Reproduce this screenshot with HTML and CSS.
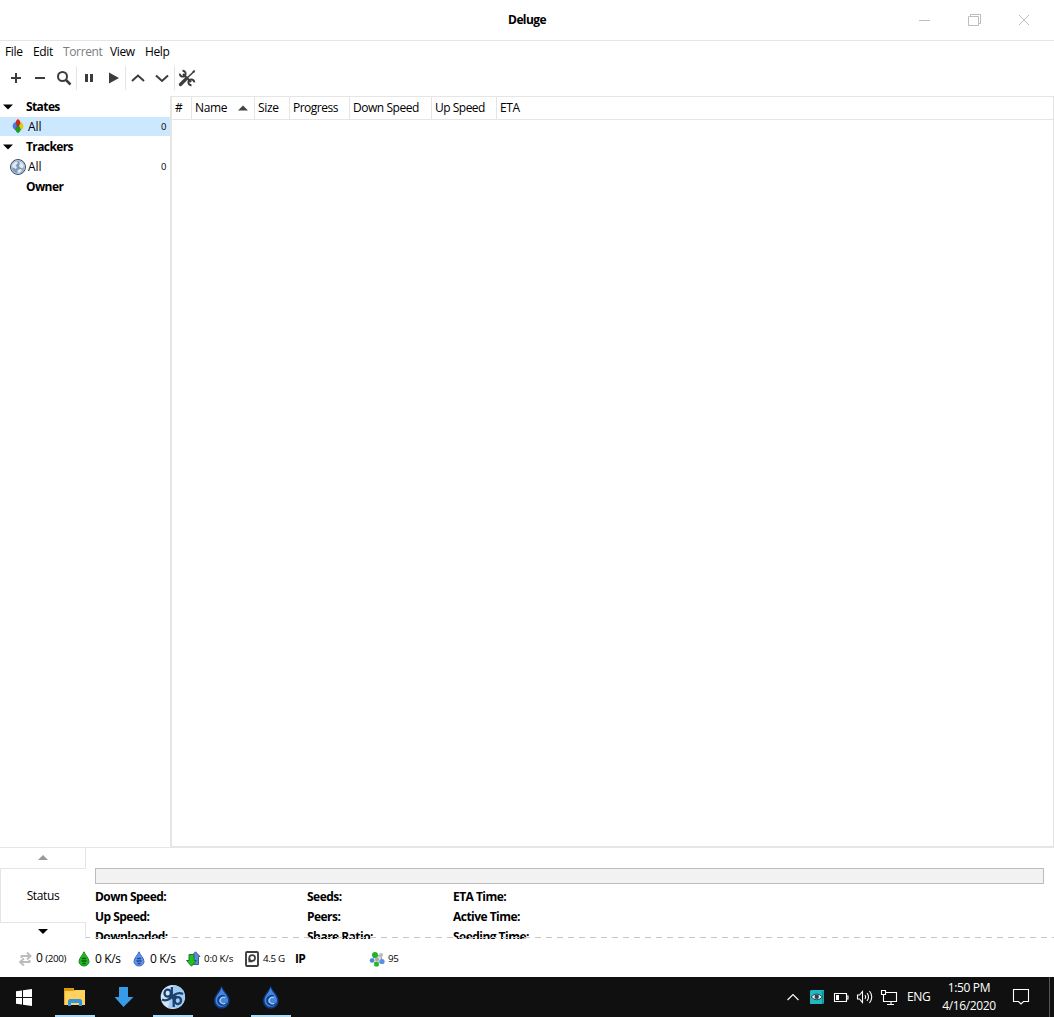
FILE: index.html
```html
<!DOCTYPE html>
<html lang="en">
<head>
<meta charset="utf-8">
<title>Deluge</title>
<link rel="stylesheet" href="styles.css">
</head>
<body>
<div class="window">
  <header class="titlebar">
    <h1 class="title">Deluge</h1>
    <div class="controls">
      <svg width="50" height="40"><path d="M20 20.500h11" class="ctl"/></svg>
      <svg width="50" height="40"><path d="M19.500 16.500h10v9h-10zM21.500 16.500v-2h10v9h-2" class="ctl"/></svg>
      <svg width="50" height="40"><path d="M20 15l10 10M30 15l-10 10" class="ctl"/></svg>
    </div>
  </header>
  <nav class="menubar"><span class="m-file">File</span><span class="m-edit">Edit</span><span class="m-torrent">Torrent</span><span class="m-view">View</span><span>Help</span></nav>
  <div class="toolbar">
    <svg class="tool" width="24" height="24"><path d="M7 12h10M12 7v10" class="thick"/></svg>
    <svg class="tool" width="24" height="24"><path d="M7 12h10" class="thick"/></svg>
    <svg class="tool end" width="25" height="24"><circle cx="10.500" cy="10.500" r="4.500" class="thick"/><path d="M14 14l4.500 4.500" class="thick wide"/></svg>
    <svg class="tool" width="24" height="24"><path d="M8 8h3v8H8zM13 8h3v8h-3z" fill="#3c3c3c"/></svg>
    <svg class="tool end" width="25" height="24"><path d="M8 6.500l10 5.500-10 5.500z" fill="#3c3c3c"/></svg>
    <svg class="tool" width="24" height="24"><path d="M6 15l6-5.500 6 5.500" class="thick"/></svg>
    <svg class="tool end" width="25" height="24"><path d="M6 9.500l6 5.500 6-5.500" class="thick"/></svg>
    <svg class="tool" width="24" height="24"><path d="M19 5.500L11.500 12.500" stroke="#3c3c3c" stroke-width="1.600"/><path d="M10.500 13.500L5.500 18.500" stroke="#3c3c3c" stroke-width="3.200" stroke-linecap="round"/><path d="M17.200 5.200l2-1.200 1 1-1.200 2z" fill="#3c3c3c"/><path d="M8 8l8 8" stroke="#3c3c3c" stroke-width="2.200"/><path d="M7.500 4.800a2.900 2.900 0 1 1-2.700 2.800M16.500 19.200a2.900 2.900 0 1 1 2.700-2.800" fill="none" stroke="#3c3c3c" stroke-width="2"/></svg>
  </div>
  <main class="main">
    <aside class="sidebar">
      <div class="group"><svg width="26" height="20"><path d="M3 7.500h10l-5 5z"/></svg>States</div>
      <div class="item selected">
        <svg width="18" height="18" viewBox="0 0 18 18"><path d="M9 3L4.500 8v3L9 16l4.500-5V8z" fill="#55574a"/><path d="M9 2q2.500 1.500 2.500 4L9 8.500 6.500 6Q6.500 3.500 9 2z" fill="#d82222"/><path d="M12 5q2.500 2 2.500 4T12 13l-2-4z" fill="#e0cc08"/><path d="M9 9.500l2.500 3q0 2-2.500 3.500-2.500-1.500-2.500-3.500z" fill="#13a51b"/><path d="M6 5l2 4-2 4Q3.500 11 3.500 9T6 5z" fill="#4b7bdc"/></svg><span class="all">All</span><span class="count">0</span>
      </div>
      <div class="group"><svg width="26" height="20"><path d="M3 7.500h10l-5 5z"/></svg>Trackers</div>
      <div class="item globe">
        <svg width="18" height="18" viewBox="0 0 18 18"><circle cx="9" cy="9" r="7.500" fill="#7f9abd" stroke="#344f70"/><circle cx="9" cy="9" r="6.500" fill="none" stroke="#b7c7da"/><path d="M3.500 6l3-2.500h2v2l-2 2 1.500 1.500-1 2-2-1-2-1zM10 3.500l3 1 2 3-1 3-3-1-1-2 1-1.500zM8.500 12l3-1 2 1-3 3-2-.5z" fill="#e3e9ee"/></svg><span class="all">All</span><span class="count">0</span>
      </div>
      <div class="group owner">Owner</div>
    </aside>
    <section class="list">
      <div class="columns">
        <div class="c-num">#</div><div class="c-name">Name<svg width="10" height="6"><path d="M0 5.500L5 .5l5 5z" fill="#444"/></svg></div><div class="c-size">Size</div><div class="c-progress">Progress</div><div class="c-down">Down Speed</div><div class="c-up">Up Speed</div><div class="c-eta">ETA</div>
      </div>
    </section>
  </main>
  <section class="details">
    <div class="tabs">
      <div class="tab-arrow up"><svg width="10" height="5"><path d="M0 5l5-5 5 5z" fill="#999"/></svg></div>
      <div class="tab">Status</div>
      <div class="tab-arrow down"><svg width="10" height="5"><path d="M0 0h10L5 5z"/></svg></div>
    </div>
    <div class="panel">
      <div class="progress"></div>
      <div class="facts">
        <b>Down Speed:</b><b>Seeds:</b><b>ETA Time:</b>
        <b>Up Speed:</b><b>Peers:</b><b>Active Time:</b>
        <b>Downloaded:</b><b>Share Ratio:</b><b>Seeding Time:</b>
      </div>
      <svg class="dashes" width="968" height="1"><path d="M-2 .5h970" stroke="#c6c6c6" stroke-dasharray="6 5"/></svg>
    </div>
  </section>
  <footer class="statusbar">
    <div class="s-conn"><svg width="16" height="16"><path d="M4.500 7V5H13M10 1.500L13.500 5 10 8.500M12.500 9v2H4M7 7.500L3 11l4 3.500" fill="none" stroke="#bcbcbc" stroke-width="1.900"/></svg><span>0 <small>(200)</small></span></div>
    <div class="s-down"><svg width="16" height="16"><path d="M8 .8C7 4 3 7 3 10.500a5 4.500 0 0 0 10 0C13 7 9 4 8 .8z" fill="#19bd19" stroke="#26842a"/><path d="M6 7.500h4M5.500 10h5M6.500 12.500h3" stroke="#174e19" stroke-width="1.500"/></svg><span>0 K/s</span></div>
    <div class="s-up"><svg width="16" height="16"><path d="M8 .8C7 4 3 7 3 10.500a5 4.500 0 0 0 10 0C13 7 9 4 8 .8z" fill="#5d92f5" stroke="#456bb4"/><path d="M6 7.500h4M5.500 10h5M6.500 12.500h3" stroke="#244786" stroke-width="1.500"/></svg><span>0 K/s</span></div>
    <div class="s-proto"><svg width="16" height="16"><path d="M10.500 .8l4.500 4.700h-1.500v8H7.500v-8H6z" fill="#4f8de3" stroke="#42618b"/><path d="M4 3.500h5v6h2.500L6.500 15.200 1.500 9.500H4z" fill="#19c619" stroke="#34683a"/></svg><span>0:0 K/s</span></div>
    <div class="s-disk"><svg width="16" height="16"><rect x="2" y="1" width="12" height="14" rx="1" fill="none" stroke="#3d3d3d" stroke-width="1.900"/><circle cx="8.200" cy="7" r="2.900" fill="none" stroke="#3d3d3d" stroke-width="1.700"/><path d="M5.300 7v3.500h3" fill="none" stroke="#3d3d3d" stroke-width="1.700"/></svg><span>4.5 G</span></div>
    <b class="s-ip">IP</b>
    <div class="s-dht"><svg width="16" height="16"><path d="M6 4l-3 5 4 4 6-3-1-5z" fill="#ddd" stroke="#999"/><circle cx="12" cy="4" r="2" fill="#bbb"/><circle cx="8" cy="8.500" r="2" fill="#aaa"/><circle cx="6" cy="4" r="3" fill="#1eb32c"/><circle cx="3" cy="9.500" r="2.300" fill="#4f85d8"/><circle cx="13" cy="10.500" r="2.600" fill="#5790e7"/><circle cx="7.500" cy="13.200" r="2.500" fill="#21bd29"/></svg><span>95</span></div>
  </footer>
</div>
<div class="taskbar">
  <div class="app start"><svg width="48" height="40"><path d="M16 14.200l6-.8V20h-6zM23 13.200l9-1.200v8h-9zM16 21h6v6.600l-6-.8zM23 21h9v8l-9-1.200z" fill="#fff"/></svg></div>
  <div class="app open"><svg width="40" height="40"><path d="M9 11h10v2h11v15H9z" fill="#e4a921"/><path d="M10 14h9l2-1h9v15H10z" fill="#ffd25e"/><path d="M9 11h9.500v2L17 14H9z" fill="#d99b0d"/><path d="M13 29v-5.500l1.500-1.500h11l1.500 1.500V29h-3v-3h-8v3z" fill="#3794dc"/></svg></div>
  <div class="app"><svg width="40" height="40"><path d="M15 10h9v10h5.500L19.500 30 10.500 20H15z" fill="#379be8"/></svg></div>
  <div class="app open"><svg width="40" height="40"><circle cx="19.700" cy="19.900" r="12" fill="#d3e7fa"/><path d="M20 8a12 12 0 0 1 5 23L15 31z" fill="#a2cbf4"/><g fill="none" stroke="#1b416f" stroke-width="2.300"><ellipse cx="14.700" cy="16.200" rx="3.200" ry="3.500"/><path d="M18.800 10v7q0 3 3 3h2M9 22.500q4 2 8-1l5-4q4-2.500 8-.5M20.700 30v-7q0-3-3-3h-2"/><ellipse cx="24.800" cy="23.600" rx="3.200" ry="3.500"/></g></svg></div>
  <div class="app"><svg width="40" height="40"><path d="M19.500 8.500C18 14 12 18 12 24a7.800 7.800 0 0 0 15.600 0c0-6-6-10-8.100-15.500z" fill="#0d3a80"/><path d="M19.500 10.500c-1 5-6 8-6 13a6.300 6.300 0 0 0 12.600 0c0-5-5-8-6.600-13z" fill="#4586dc"/><path d="M22.500 19.500a4.300 4.300 0 1 0 1.700 6.300" fill="none" stroke="#12408b" stroke-width="2.400"/><path d="M23 20.800a3.200 3.200 0 1 0 .5 5" fill="none" stroke="#a5d2ff" stroke-width="1.200"/></svg></div>
  <div class="app open"><svg width="40" height="40"><path d="M19.500 8.500C18 14 12 18 12 24a7.800 7.800 0 0 0 15.600 0c0-6-6-10-8.100-15.500z" fill="#0d3a80"/><path d="M19.500 10.500c-1 5-6 8-6 13a6.300 6.300 0 0 0 12.600 0c0-5-5-8-6.600-13z" fill="#4586dc"/><path d="M22.500 19.500a4.300 4.300 0 1 0 1.700 6.300" fill="none" stroke="#12408b" stroke-width="2.400"/><path d="M23 20.800a3.200 3.200 0 1 0 .5 5" fill="none" stroke="#a5d2ff" stroke-width="1.200"/></svg></div>
  <div class="tray">
    <svg width="24" height="40"><path d="M6.500 23l5.500-5.500 5.500 5.500" class="tr"/></svg>
    <svg width="24" height="40"><path d="M5 14l1-1h13v13l-1 1H5z" fill="#20b8c0"/><path d="M17.800 14v13" stroke="#087b83"/><path d="M6 20q5.700-6 11.500 0-5.700 5.500-11.500 0z" fill="#e9f4f4" stroke="#28464b"/><circle cx="11.700" cy="19.800" r="2.200" fill="#26464b"/></svg>
    <svg width="24" height="40"><path d="M5.500 16.500h12v8h-12zM17.500 19h1.500v3h-1.500" class="tr"/><path d="M7 18h3v5H7z" fill="#fff"/></svg>
    <svg width="24" height="40"><path d="M4.500 18h2l3-3.500v11l-3-3.500h-2zM12 18q1.500 2 0 4M14 16q3 4 0 8M16.500 14q4.500 6 0 12" class="tr"/></svg>
    <svg width="24" height="40"><path d="M9 15.500h10.500v9H7.500M4.500 13.500h4v4h-4zM6.500 17.500v7h2M14 24.500v3M10 27.500h7" class="tr"/></svg>
    <span class="lang">ENG</span>
    <div class="clock"><span>1:50 PM</span><span>4/16/2020</span></div>
    <svg width="36" height="40"><path d="M10.500 12.500h15v12h-5l-2.500 2.500-2.500-2.500h-5z" class="tr"/></svg>
    <div class="desktop"></div>
  </div>
</div>
</body>
</html>
```
FILE: styles.css
```css
* { box-sizing: border-box; }
body { margin: 0; width: 1054px; height: 1017px; overflow: hidden; display: flex; flex-direction: column; font: 12px/20px "Open Sans", "Noto Sans", sans-serif; letter-spacing: -.36px; color: #000; background: #fff; }
svg { display: block; flex: none; }
b, .group, .title { font-weight: 700; letter-spacing: -.6px; }
.window { height: 977px; display: flex; flex-direction: column; }
.titlebar { height: 41px; border-bottom: 1px solid #e5e5e5; display: grid; grid-template-columns: 155px 1fr 155px; }
.title { grid-column: 2; margin: 0; font-size: 12px; line-height: 39px; text-align: center; }
.controls { display: flex; }
.ctl { fill: none; stroke: #bdbdbd; stroke-width: 1; }
.menubar { height: 21px; display: flex; padding-left: 5px; line-height: 21px; }
.m-file { width: 28px; }
.m-edit { width: 30px; }
.m-torrent { width: 47px; color: #7c7c7c; }
.m-view { width: 35px; }
.toolbar { height: 34px; display: flex; align-items: flex-start; padding: 4px 0 0 4px; }
.thick { fill: none; stroke: #3c3c3c; stroke-width: 2; }
.wide { stroke-width: 2.5; }
.tool.end { border-right: 1px solid #e5e5e5; }
.main { height: 751px; display: flex; }
.sidebar { width: 170px; padding-top: 1px; }
.group { height: 20px; display: flex; }
.group svg { margin-left: -.5px; margin-right: .5px; }
.owner { padding-left: 26px; }
.item { height: 20px; display: flex; align-items: center; padding: 0 4px 0 9px; }
.selected { background: #cce8ff; height: 19px; margin-bottom: 1px; }
.selected svg, .globe svg { margin-bottom: 1px; }
.all { padding-left: 1px; letter-spacing: 0; }
.count { margin-left: auto; font-size: 9.5px; }
.list { flex: 1; border: 1px solid #e5e5e5; border-left-width: 2px; }
.columns { display: flex; height: 23px; border-bottom: 1px solid #e5e5e5; line-height: 22px; }
.columns div { border-right: 1px solid #e5e5e5; padding-left: 3px; }
.columns .c-num { width: 20px; }
.columns .c-name { width: 63px; display: flex; justify-content: space-between; align-items: center; padding-right: 6px; }
.columns .c-size { width: 35px; }
.columns .c-progress { width: 60px; letter-spacing: -.5px; }
.columns .c-down { width: 82px; letter-spacing: -.45px; }
.columns .c-up { width: 65px; letter-spacing: -.5px; }
.columns .c-eta { flex: 1; border: 0; }
.details { height: 92px; display: flex; }
.tabs { width: 86px; display: flex; flex-direction: column; }
.tab-arrow { display: flex; justify-content: center; border-right: 1px solid #e5e5e5; }
.up { height: 21px; padding-top: 7px; border-top: 1px solid #e5e5e5; }
.tab { height: 55px; border: 1px solid #e5e5e5; border-right: 0; padding-right: 1px; text-align: center; line-height: 54px; }
.down { height: 16px; padding-top: 6px; }
.panel { flex: 1; border-top: 1px solid #e5e5e5; padding-top: 20px; position: relative; }
.progress { height: 16px; margin: 0 10px 3px 9px; border: 1px solid #bcbcbc; background: #f2f2f2; }
.facts { display: grid; grid-template-columns: 212px 146px 1fr; grid-auto-rows: 20px; height: 52px; padding-left: 9px; overflow: hidden; }
.facts b { letter-spacing: -.53px; }
.dashes { position: absolute; left: 0; top: 89px; }
.statusbar { height: 38px; display: flex; align-items: center; padding: 1px 0 0 17px; }
.statusbar div { display: flex; align-items: center; gap: 3px; }
small, .s-proto span, .s-disk span, .s-dht span { font-size: 9.8px; }
.s-conn { width: 59px; }
.s-down { width: 55px; }
.s-up { width: 54px; }
.s-proto { width: 59px; }
.s-proto span { letter-spacing: -.2px; }
.s-disk { width: 51px; }
.s-ip { width: 74px; }
.taskbar { height: 40px; background: #101010; color: #fff; display: flex; }
.app { width: 40px; margin-right: 9px; }
.start { width: 48px; margin-right: 7px; }
.open { border-bottom: 2px solid #a8dcf8; }
.open svg { margin-bottom: -2px; }
.tray { margin-left: auto; display: flex; align-items: center; }
.tr { fill: none; stroke: #fff; stroke-width: 1.1; }
.lang { width: 36px; padding-left: 6px; }
.clock { width: 66px; padding-right: 2px; display: flex; flex-direction: column; text-align: center; line-height: 18px; }
.desktop { width: 5px; height: 40px; border-left: 1px solid #555; margin-left: 10px; }
```
